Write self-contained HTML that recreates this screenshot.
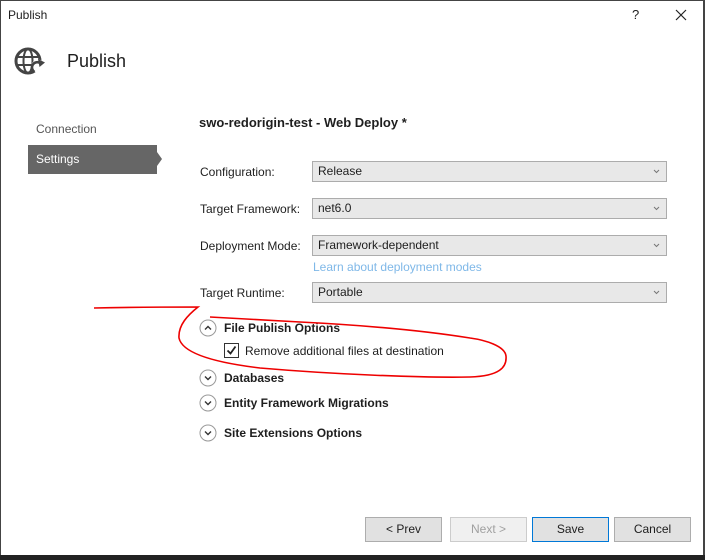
<!DOCTYPE html>
<html><head><style>
body{margin:0;width:705px;height:560px;overflow:hidden;background:#fff;font-family:"Segoe UI","Liberation Sans",sans-serif;font-size:12px;color:#1e1e1e;position:relative}
.a{position:absolute;white-space:nowrap}
.dd{position:absolute;left:312px;width:353px;height:19px;border:1px solid #acacac;background:#e8e8e8;}
.dd span{position:absolute;left:5px;top:2px}
.dd svg{position:absolute;right:6px;top:7px}
.btn{position:absolute;top:517px;height:23px;width:75px;border:1px solid #adadad;background:#e1e1e1;text-align:center;line-height:23px}
.h{font-weight:bold}
</style></head><body>
<div class="a" style="left:0;top:0;width:1px;height:560px;background:#444"></div>
<div class="a" style="left:0;top:0;width:705px;height:1px;background:#444"></div>
<div class="a" style="left:703px;top:0;width:2px;height:560px;background:#444"></div>
<div class="a" style="left:0;top:555px;width:705px;height:5px;background:#222"></div>
<div class="a" style="left:8px;top:8px">Publish</div>
<div class="a" style="left:632px;top:7px;font-size:13px">?</div>
<svg class="a" style="left:675px;top:9px" width="12" height="12"><path d="M1 1L11 11M11 1L1 11" stroke="#222" stroke-width="1.2"/></svg>
<svg class="a" style="left:14px;top:46px" width="34" height="30" viewBox="0 0 34 30">
<circle cx="14" cy="15" r="12" fill="none" stroke="#444" stroke-width="3"/>
<ellipse cx="14" cy="15" rx="4.5" ry="12" fill="none" stroke="#444" stroke-width="2"/>
<path d="M3 11H25M3 19H25" stroke="#444" stroke-width="2"/>
<circle cx="24" cy="20" r="6.5" fill="#fff"/>
<path d="M20.5 26A5 5 0 0 1 26 17" fill="none" stroke="#444" stroke-width="2.6"/>
<path d="M24 13L31 16.5L25.5 21Z" fill="#444"/>
</svg>
<div class="a" style="left:67px;top:51px;font-size:18px">Publish</div>
<div class="a" style="left:36px;top:122px;color:#555">Connection</div>
<div class="a" style="left:28px;top:145px;width:129px;height:29px;background:#666"></div>
<div class="a" style="left:157px;top:152px;width:0;height:0;border-top:7px solid transparent;border-bottom:7px solid transparent;border-left:5px solid #666"></div>
<div class="a" style="left:36px;top:152px;color:#fff">Settings</div>
<div class="a h" style="left:199px;top:115px;font-size:13px">swo-redorigin-test - Web Deploy *</div>
<div class="a" style="left:200px;top:165px">Configuration:</div>
<div class="a" style="left:200px;top:202px">Target Framework:</div>
<div class="a" style="left:200px;top:239px">Deployment Mode:</div>
<div class="a" style="left:200px;top:286px">Target Runtime:</div>
<div class="dd" style="top:161px"><span>Release</span><svg width="7" height="5"><path d="M1 1L3.5 3.5L6 1" fill="none" stroke="#777"/></svg></div>
<div class="dd" style="top:198px"><span>net6.0</span><svg width="7" height="5"><path d="M1 1L3.5 3.5L6 1" fill="none" stroke="#777"/></svg></div>
<div class="dd" style="top:235px"><span>Framework-dependent</span><svg width="7" height="5"><path d="M1 1L3.5 3.5L6 1" fill="none" stroke="#777"/></svg></div>
<div class="a" style="left:313px;top:260px;color:#7fb8e8">Learn about deployment modes</div>
<div class="dd" style="top:282px"><span>Portable</span><svg width="7" height="5"><path d="M1 1L3.5 3.5L6 1" fill="none" stroke="#777"/></svg></div>
<svg class="a" style="left:199px;top:319px" width="20" height="20"><circle cx="9" cy="9" r="8" fill="#fff" stroke="#999"/><path d="M6 10.5L9 7.5L12 10.5" fill="none" stroke="#333" stroke-width="1.4"/></svg>
<div class="a h" style="left:224px;top:321px">File Publish Options</div>
<div class="a" style="left:224px;top:343px;width:13px;height:13px;border:1px solid #333;background:#fff"></div>
<svg class="a" style="left:226px;top:345px" width="11" height="11"><path d="M1.5 5.5L4.5 8.5L9.5 1.5" fill="none" stroke="#222" stroke-width="1.8"/></svg>
<div class="a" style="left:245px;top:344px">Remove additional files at destination</div>
<svg class="a" style="left:199px;top:369px" width="20" height="20"><circle cx="9" cy="9" r="8" fill="#fff" stroke="#999"/><path d="M6 7.5L9 10.5L12 7.5" fill="none" stroke="#333" stroke-width="1.4"/></svg>
<div class="a h" style="left:224px;top:371px">Databases</div>
<svg class="a" style="left:199px;top:394px" width="20" height="20"><circle cx="9" cy="9" r="8" fill="#fff" stroke="#999"/><path d="M6 7.5L9 10.5L12 7.5" fill="none" stroke="#333" stroke-width="1.4"/></svg>
<div class="a h" style="left:224px;top:396px">Entity Framework Migrations</div>
<svg class="a" style="left:199px;top:424px" width="20" height="20"><circle cx="9" cy="9" r="8" fill="#fff" stroke="#999"/><path d="M6 7.5L9 10.5L12 7.5" fill="none" stroke="#333" stroke-width="1.4"/></svg>
<div class="a h" style="left:224px;top:426px">Site Extensions Options</div>
<svg class="a" style="left:0;top:0" width="705" height="560"><path d="M94 308C140 307 180 307 198 307C188 315 178 325 179 338C182 352 210 362 260 368C330 374 420 378 470 377C500 376 507 367 506 356C505 346 485 340 470 338C420 330 360 325 300 322C260 320 230 318 210 317" fill="none" stroke="#e00" stroke-width="1.6"/></svg>
<div class="btn" style="left:365px">&lt; Prev</div>
<div class="btn" style="left:450px;background:#f0f0f0;border-color:#ccc;color:#a0a0a0">Next &gt;</div>
<div class="btn" style="left:532px;border-color:#0078d7">Save</div>
<div class="btn" style="left:614px">Cancel</div>
</body></html>
